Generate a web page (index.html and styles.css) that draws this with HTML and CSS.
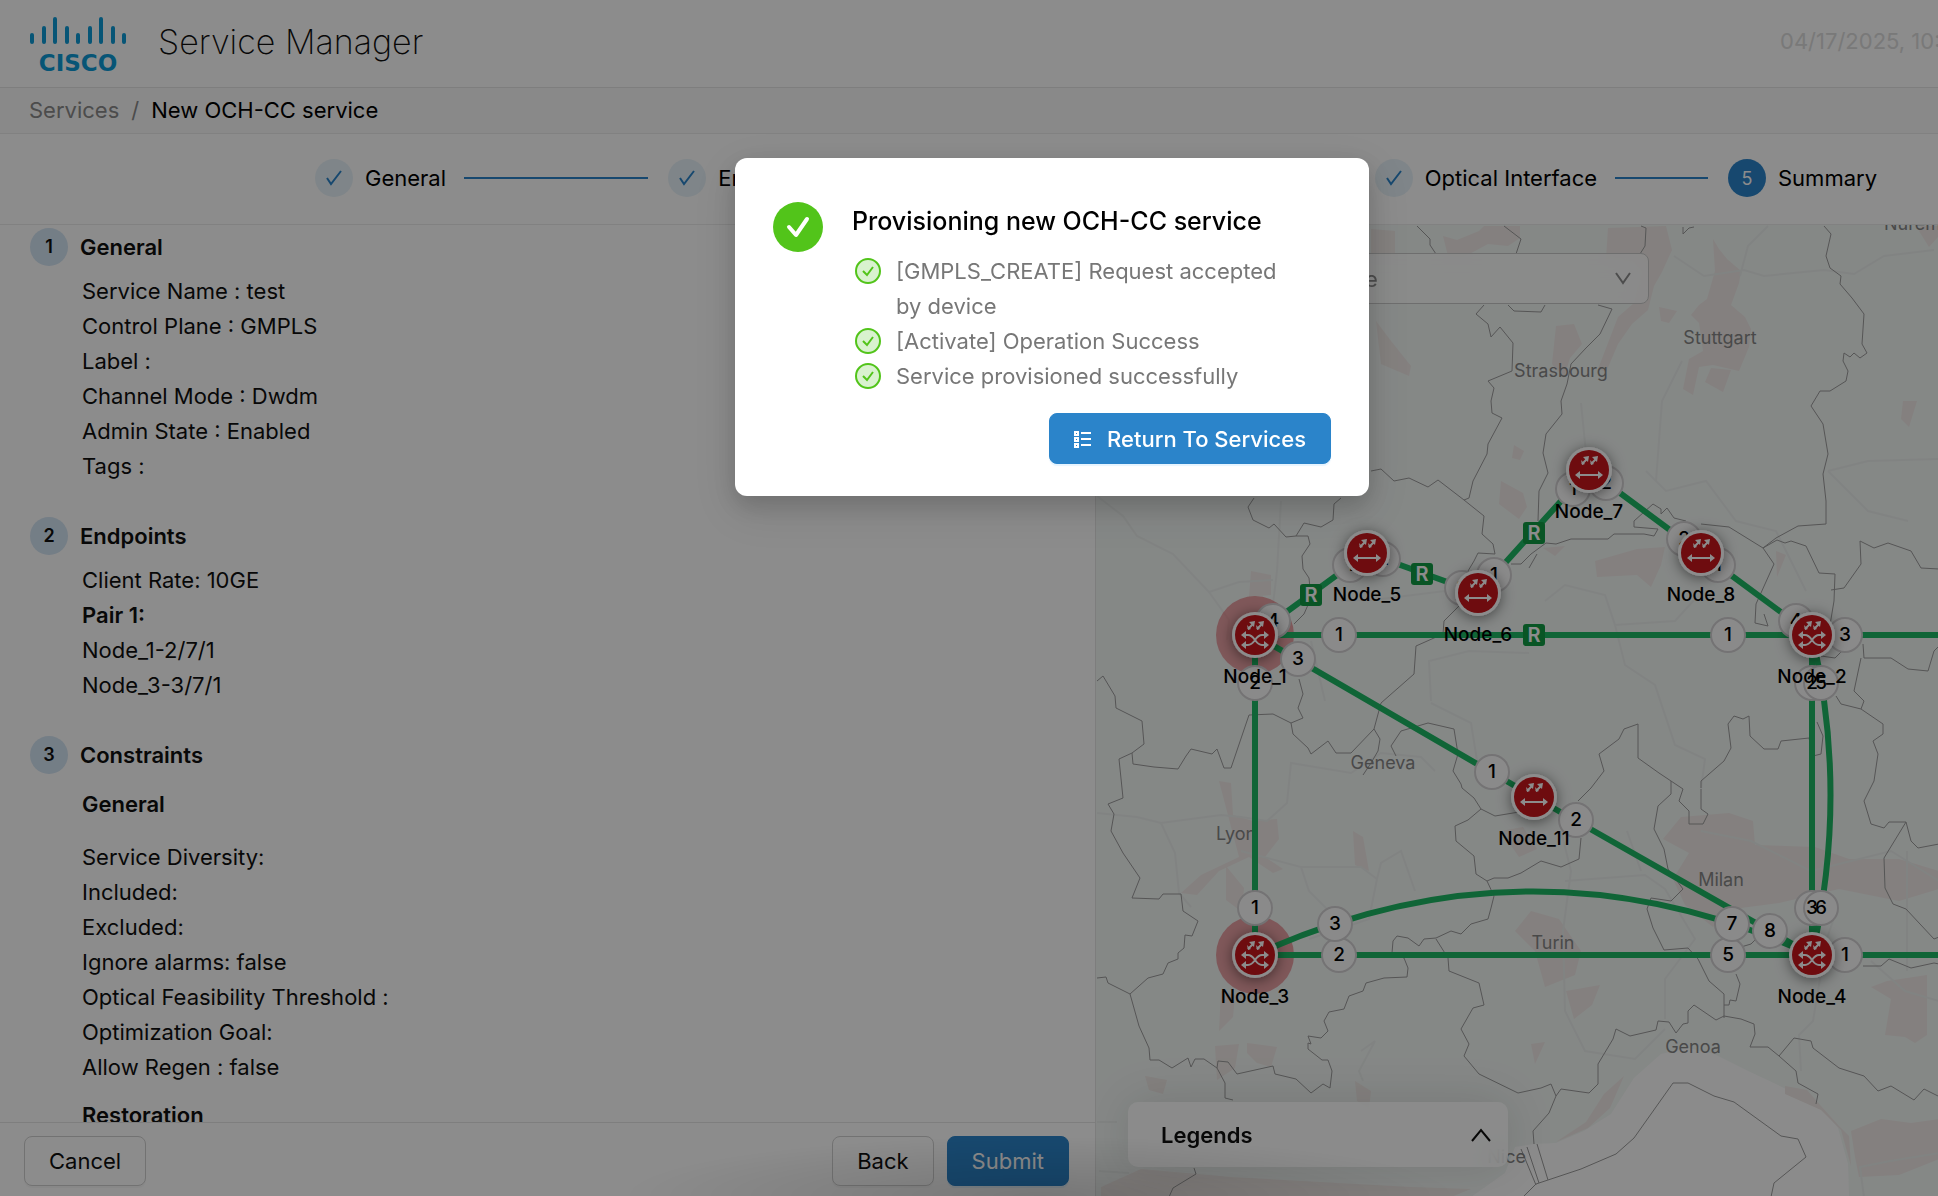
FILE: index.html
```html
<!DOCTYPE html>
<html lang="en">
<head>
    <meta charset="UTF-8">
    <meta name="viewport" content="width=device-width, initial-scale=1.0">
    <title>Service Manager</title>
    <link rel="stylesheet" href="styles.css">
</head>
<body>

<div class="app">
    <!-- Header -->
    <header class="header">
        <svg class="logo" viewBox="0 0 98 56" role="img" aria-label="Cisco">
            <path d="M2 18v7M14 11v14M25 2v23M37 11v14M48 18v7M60 11v14M71 2v23M83 11v14M94 18v7" />
            <text x="48" y="54" text-anchor="middle">CISCO</text>
        </svg>
        <h1>Service Manager</h1>
        <div class="header-date">04/17/2025, 10:42:18</div>
    </header>

    <nav class="breadcrumb">
        <a href="#">Services</a>
        <span class="separator">/</span>
        <span class="current">New OCH-CC service</span>
    </nav>

    <!-- Wizard steps -->
    <ol class="steps">
        <li class="step">
            <span class="step-icon"><svg viewBox="0 0 20 20"><path d="M3 10l4 6 10-13" /></svg></span>
            <span class="step-title">General</span>
        </li>
        <li class="step">
            <span class="step-icon"><svg viewBox="0 0 20 20"><path d="M3 10l4 6 10-13" /></svg></span>
            <span class="step-title">Endpoints</span>
        </li>
        <li class="step">
            <span class="step-icon"><svg viewBox="0 0 20 20"><path d="M3 10l4 6 10-13" /></svg></span>
            <span class="step-title">Constraints</span>
        </li>
        <li class="step">
            <span class="step-icon"><svg viewBox="0 0 20 20"><path d="M3 10l4 6 10-13" /></svg></span>
            <span class="step-title">Optical Interface</span>
        </li>
        <li class="step active">
            <span class="step-icon">5</span>
            <span class="step-title">Summary</span>
        </li>
    </ol>

    <main class="content">
        <section class="summary">
            <div class="summary-body">
                <div class="block">
                    <h2><span class="num">1</span>General</h2>
                    <ul>
                        <li>Service Name : test</li>
                        <li>Control Plane : GMPLS</li>
                        <li>Label :</li>
                        <li>Channel Mode : Dwdm</li>
                        <li>Admin State : Enabled</li>
                        <li>Tags :</li>
                    </ul>
                </div>
                <div class="block">
                    <h2><span class="num">2</span>Endpoints</h2>
                    <ul>
                        <li>Client Rate: 10GE</li>
                        <li><b>Pair 1:</b></li>
                        <li>Node_1-2/7/1</li>
                        <li>Node_3-3/7/1</li>
                    </ul>
                </div>
                <div class="block">
                    <h2><span class="num">3</span>Constraints</h2>
                    <h3 class="first">General</h3>
                    <ul>
                        <li>Service Diversity:</li>
                        <li>Included:</li>
                        <li>Excluded:</li>
                        <li>Ignore alarms: false</li>
                        <li>Optical Feasibility Threshold :</li>
                        <li>Optimization Goal:</li>
                        <li>Allow Regen : false</li>
                    </ul>
                    <h3>Restoration</h3>
                </div>
            </div>
            <footer class="actions">
                <button class="btn" type="button">Cancel</button>
                <div class="actions-right">
                    <button class="btn" type="button">Back</button>
                    <button class="btn btn-primary" type="button">Submit</button>
                </div>
            </footer>
        </section>

        <!-- Topology map -->
        <section class="map">
            <svg class="map-canvas" viewBox="1095 224 842 971" preserveAspectRatio="xMinYMin slice">
                <defs>
                    <filter id="shadow" x="-50%" y="-50%" width="200%" height="200%">
                        <feDropShadow dx="0" dy="2" stdDeviation="7" flood-color="#000" flood-opacity="0.5" />
                    </filter>
                    <g id="disc">
                        <circle r="23" class="node-ring" filter="url(#shadow)" />
                        <circle r="20" class="node-fill" />
                        <path class="node-line" d="M-7-6l5-5M2-6l5-5" />
                        <path class="node-head" d="M-8-10l4 4-3 1zM1-10l4 4-3 1zM0-14l-1 6-5-5zM9-14l-1 6-5-5z" />
                    </g>
                    <g id="amp">
                        <use href="#disc" />
                        <path class="node-line" d="M-10 5h20" />
                        <path class="node-head" d="M-14 5l5-4v8zM14 5l-5-4v8z" />
                    </g>
                    <g id="roadm">
                        <use href="#disc" />
                        <path class="node-line" d="M-10 0h3c7 0 7 10 14 10h3M-10 10h3c7 0 7-10 14-10h3" />
                        <path class="node-head" d="M-14 0l5-4v8zM14 0l-5-4v8zM-14 10l5-4v8zM14 10l-5-4v8z" />
                    </g>
                    <g id="regen">
                        <rect x="-11" y="-11" width="22" height="22" rx="3" />
                        <text y="7">R</text>
                    </g>
                </defs>

                <rect class="land" x="1095" y="224" width="900" height="1000" />
                <path class="sea" d="M1470 1196l34-24 10-26 19-3 22-1 28-12 27-17 23-36 27-24 27-6 26 6 34 17 36 17 37 20 17 20 10 36 1 33z" />

                <g class="urban">
                    <path d="M1442 235l14 4 22-9 5-5 36 0v12l-12 8-20-2-26 14-14-2zM1370 228l24 2v25h-24zM1607 227l58-2 6 24-10 22-8 14-6 24-16 14-14 20-12 28-8-3 20-52 16-14 8-32-10-10-26-2z" />
                    <path d="M1712 238l6 10 8 10 14 12-2 12-8 22 14 12 6 12-2 18-10 24-26-6-14 2-6 28-10-6 6-30 14-8-4-28-8-8 8-10 8-6 8-28zM1658 306l18 4-8 12-8-2zM1710 367l20 2-8 22-18-10zM1555 325l18-2 8 20-12 14-6 20-12-14zM1375 320l15 20 20 25-2 10-28-12z" />
                    <path d="M1500 480l22 12 4 14-8 12-20-15zM1513 444l10 6-4 9-8-2zM1902 400h14l-8 26-8-8zM1920 225h18v10l-10 11-10-16z" />
                    <path d="M1594 560l42-12 28-2-4 18-10 22-14-12-40 2zM1542 547l22-2-10 10zM1250 570l20 4v20l-22 2zM1775 550l10 4-9 22z" />
                    <path d="M1218 780l12 2 2 32 20 6 24-2 2 20-14 18 18 12-10 4-24-16-30 14-22 24-16-2 20-18 38-18zM1225 865l18 22-2 24-16-12zM1352 830l10 6 6 34-14-6z" />
                    <path d="M1680 816l48-4 24 8 2 24 60 2 34 12 50 0 40 12v18l-40 12-60-12-60 14-46 6-20 18-28-22-12-26 16-26-26-14z" />
                    <path d="M1530 910l28 8 22 32-6 24-30 12-10-36-20-20zM1565 990l34-6-8 20-18 14zM1500 830l22-4 14 22-18 8zM1886 980l40-6v60l-12 8-10-6-20-2 6-36-20-12z" />
                    <path d="M1214 1045l24-2-4 24-18 12zM1246 1042l30 4-6 20-14-4-10-10zM1144 1075l22 4-4 14-14-4zM1354 1080l16 10-2 18-12-8zM1220 990l14 4-2 22-14 14zM1530 1043l14-2-10 22zM1100 1186l40-18 90 8 180 10 60 2-20 8h-350z" />
                    <path d="M1784 1085l22 4 14 16 18 20 10 10 2 30-10-36-20-20-36-16zM1850 1130l30-12 30 4 28-4v40l-40 16-40 2-4-20zM1555 1141l32-14 22-20 14-32-20 18-18 28z" />
                </g>

                <path class="roads" d="M1096 495l26 20 14 20 36 18 36 38 30-10 34-2M1280 500l-4 70-6 50M1208 591l20 28-2 20M1096 812l40 4 24 6 60-8 20 2 26 4 20-18 4-40 60 10 30-20 40 4 14 14M1160 822l14 30 4 40 12 14M1240 850l60 16 8 24 20 20M1300 866l60 0 16 12 4-16 20-12 14 40M1376 878l-8 40-60 20M1360 1050l14-10-16 30 4 10M1430 700l-2-40 40-10 60 2M1430 702l40 20 8 50M1645 470l20 20 40-10 30 40 40 10 30 60M1580 402l8 80M1655 480l6-80 20-40M1673 255l30 20 40-6 20 6 60-6 30 4 30-18 50-6M1739 275l8-30 20-20M1827 470l40-10 71-2M1827 470l40 40 40 10M1544 600l20-16 40 10 10 30 60-4 20-22M1614 624l10 40 30 20 20 60 30 14-4 30M1560 830l10 40-8 60 2 80 20 40 50 8 30-30M1564 880l80-6 20 14 30 50-30 40v40M1640 870l-14-40M1700 830l50 10 60 30 80-20 48 30M1822 860l10 60-14 40M1822 960l-10 60-14 14 2 36M1870 960l34 30 34 10M1906 850v120M1340 600l40-2 80-10M1310 640l14 60M1270 420l90 40M1863 1196l-4-30 30-6 49-8M1096 1121h20M1098 1170l30 2" />

                <g class="borders">
                    <path d="M1416 225l13 13v6l6 9M1503 225l17 13-5 15M1640 225l5 2-1 18-5 8M1682 226v7l6-6 5-1" />
                    <path d="M1823 225l7 8-5 22 4 12 11 8-1 8 12 14 12 16-2 30 5 9-7 5-6-5-4 4-6-4-1 8 5 10-2 10-16 10h-10l-6 10-3 5 12 18 5 30-5 20 3 27v23l-28 2-22 12-13 10" />
                    <path d="M1483 304l-8 9 12 10 3 13 9-10 13 16-1 28-24 10 6 7-3 13 1 12 10 5-14 26-1 10-14 27-4 17-5 2M1507 304l6 6 27 1 4-7M1597 304l14 4-12 25-14 14-15 16-4 20-6 17 1 13-16 20-3 19 5 20-9 18-1 30" />
                    <path d="M1370 470l10-2 13 12 15-3 19 9 10-7 26 20 20 16-2 18 11 10 2 10-17-1-4 8-6 10M1340 497l-7 6-1 16-12 7-17-4-8 13-10 1-12-13-5 4-16-8-5-13 6-9" />
                    <path d="M1295 535h12l2 8-8 12 1 13 6 9 2 20-7 16-10 10M1460 603l-17 17-1 13-27 12-2 28-33 29-7 26-23 24h-15l-8-12-17 13-3-6-15-14-2-11 12-5-5-10 5-14-4-15" />
                    <path d="M1290 722l-18-9-24 1-18 53h-7l-7-19-5 5-21-5-5 7-8 13-24-2-21-3-1-11 12-9-2-23-26-13-1-12-12-20-6 5M1131 752l-13 6 4 39-15 6 6 10-3 17 12 22 17 25-8 20 27 1 4-5h18l2 17 15 10-6 15-7-1-1 13-6 5v6l-10 4-5 11-15 4-18 16-22-11-2-6-9 1" />
                    <path d="M1129 993l9 32 10 22 1 12h9l13 8 16-10 3 9 4-8h9l13 9 8 15v15l8 2M1216 1067l1-7 10 1 9 12 36-8 2 8 21 5 15 14 12-9 7 4 2-17-4-11h-6l-14-11v-6l3 1-3-8 13 2 7-7-4-10 5-9 15-3 5-13 14-5 3-8 18-5 23-1 1-9-4-10-12-5 1-12 4-5 11 2 11 8 5-7 12-1 15-7 10 3 10-10 17-5 3-11 3-12-7-15-11-7-2-18-18-15-1-15 13-6 13-11-7-11-12-10-1-4-8-13 5-17-4-25-26-6-27 8-10 15 5 10M1373 728l6 10-2 12-7 12-8 12" />
                    <path d="M1486 880l7-3h14l13-5 20-12 20 6 18-8 2-21M1480 808l14 7 24-4 10-8M1435 938l12 19 1 13 30 12 5 22-11 3-12 21 8 15-5 12 15 18 39 19 23-5 10-4 5 12-7 17-16 18 1 13" />
                    <path d="M1555 1095l5-7 28 4 9-9v-20l15-25 3-10 14 7 26-6 2-9 11 1 7 11 7-9 5-1v-12l6-6 22 15 8-4 17 3 13 5 1 10-5 13h18l11 9 17 15 2 12 20 11-2 10M1778 1055l15-18 17 3 2 7 26 20 25 8 14 15 13-5 23 14 10-11 14 7" />
                    <path d="M1723 1017v-24l-15-13-11-22-10-11-24 2-11-22-6-19 4-11 20 3 12-12-15-20-4-20-10-20 4-23 13-12v-13l-12-8-21-15v-34l-14 5-5 10-20 15 5 17-13 17-13 13M1735 973l4 10-4 17-6-1-1 5h-5M1740 946l10-3 6-6" />
                    <path d="M1700 787v-7l23-20 7-13-3-24 6-8 9 3 6-3 1 20 14 13h14l3-8 28-3 4 18 8-2 2-18-6-14M1670 780l12 8-4 12 10 10v13h14l5-10-7-5v-20M1773 563l-18 40-1 19 13 3-4-12" />
                    <path d="M1762 547l11 16M1762 547l14-8 8 3 6-2 15 5 13 27 16 1-1 27-5 30M1830 589l13-2 17-24-1-23 14 7 14-5 23 8 10 17 18 1M1700 523l28 3 34 21M1652 503l-19 17v6l24 2-4 7-10-2-30 0-6 5h-37l-15 5-10-1-15 11-10 10h-10M1652 503l8 5v5l6-6 7 10 12 3" />
                    <path d="M1862 643l1 14 27 0 17 11 20 2 6-20 5-5M1860 657l-7 33 10 10-3 8-20-5-5-8M1860 708l22 15v10l-10 7 5 13-4 27-10 20 7 23 13 4 5-6h17l5 19 7 7 21-4M1905 821l-22 36 1 30 8 16 13 5 28 30 5-2M1862 965l18 0 8-7 22 9 23-5 5 1M1820 655l14 2 6-6M1536 553l-8 14" />
                    <path d="M1522 1196l13-13 45-15 35-15 18-16 39-55h15l26 13 20 6 47 34 17 3 8 18-32 26-3 14M1520 1148l15 36M1526 1146l12 36M1536 1143l11 36M1193 1167l2 6-23 14-4 9" />
                </g>

                <g class="cities">
                    <text x="1719" y="343" text-anchor="middle">Stuttgart</text>
                    <text x="1560" y="376" text-anchor="middle">Strasbourg</text>
                    <text x="1382" y="768" text-anchor="middle">Geneva</text>
                    <text x="1215" y="839">Lyon</text>
                    <text x="1720" y="885" text-anchor="middle">Milan</text>
                    <text x="1552" y="948" text-anchor="middle">Turin</text>
                    <text x="1692" y="1052" text-anchor="middle">Genoa</text>
                    <text x="1525" y="1162" text-anchor="end">Nice</text>
                    <text x="1883" y="229">Nuremberg</text>
                </g>

                <circle class="halo" cx="1254" cy="634" r="39" />
                <circle class="halo" cx="1254" cy="954" r="39" />

                <g class="links">
                    <path d="M1254 634L1366 552L1477 592L1588 469L1700 552L1811 634" />
                    <path d="M1254 634H1995M1254 954H1995M1254 634V954M1811 634V954" />
                    <path d="M1254 634L1533 796L1811 954" />
                    <path d="M1254 954Q1532 827 1811 954M1811 634Q1848 794 1811 954" />
                </g>

                <g class="regens">
                    <use href="#regen" x="1310" y="594" />
                    <use href="#regen" x="1421" y="573" />
                    <use href="#regen" x="1533" y="532" />
                    <use href="#regen" x="1533" y="634" />
                </g>

                <!-- link port badges -->
                <g class="ports">
                    <circle cx="1272" cy="620" r="17" /><text x="1272" y="626">4</text>
                    <circle cx="1338" cy="634" r="17" /><text x="1338" y="640">1</text>
                    <circle cx="1297" cy="658" r="17" /><text x="1297" y="664">3</text>
                    <circle cx="1254" cy="682" r="17" /><text x="1254" y="688">2</text>
                    <circle cx="1349" cy="564" r="17" /><text x="1349" y="570">1</text>
                    <circle cx="1382" cy="558" r="17" /><text x="1382" y="564">2</text>
                    <circle cx="1461" cy="587" r="17" /><text x="1461" y="593">2</text>
                    <circle cx="1493" cy="574" r="17" /><text x="1493" y="580">1</text>
                    <circle cx="1572" cy="488" r="17" /><text x="1572" y="494">1</text>
                    <circle cx="1605" cy="482" r="17" /><text x="1605" y="488">2</text>
                    <circle cx="1683" cy="538" r="17" /><text x="1683" y="544">2</text>
                    <circle cx="1717" cy="564" r="17" /><text x="1717" y="570">1</text>
                    <circle cx="1795" cy="620" r="17" /><text x="1795" y="626">4</text>
                    <circle cx="1727" cy="634" r="17" /><text x="1727" y="640">1</text>
                    <circle cx="1844" cy="634" r="17" /><text x="1844" y="640">3</text>
                    <circle cx="1811" cy="682" r="17" /><circle cx="1820" cy="682" r="17" />
                    <text x="1811" y="688">2</text><text x="1820" y="688">5</text>
                    <circle cx="1491" cy="771" r="17" /><text x="1491" y="777">1</text>
                    <circle cx="1575" cy="819" r="17" /><text x="1575" y="825">2</text>
                    <circle cx="1254" cy="907" r="17" /><text x="1254" y="913">1</text>
                    <circle cx="1338" cy="954" r="17" /><text x="1338" y="960">2</text>
                    <circle cx="1334" cy="923" r="17" /><text x="1334" y="929">3</text>
                    <circle cx="1727" cy="954" r="17" /><text x="1727" y="960">5</text>
                    <circle cx="1731" cy="923" r="17" /><text x="1731" y="929">7</text>
                    <circle cx="1769" cy="930" r="17" /><text x="1769" y="936">8</text>
                    <circle cx="1844" cy="954" r="17" /><text x="1844" y="960">1</text>
                    <circle cx="1811" cy="907" r="17" /><circle cx="1820" cy="907" r="17" />
                    <text x="1811" y="913">3</text><text x="1820" y="913">6</text>
                </g>

                <g class="nodes">
                    <use href="#roadm" x="1254" y="634" /><text x="1254" y="682">Node_1</text>
                    <use href="#roadm" x="1811" y="634" /><text x="1811" y="682">Node_2</text>
                    <use href="#roadm" x="1254" y="954" /><text x="1254" y="1002">Node_3</text>
                    <use href="#roadm" x="1811" y="954" /><text x="1811" y="1002">Node_4</text>
                    <use href="#amp" x="1366" y="552" /><text x="1366" y="600">Node_5</text>
                    <use href="#amp" x="1477" y="592" /><text x="1477" y="640">Node_6</text>
                    <use href="#amp" x="1588" y="469" /><text x="1588" y="517">Node_7</text>
                    <use href="#amp" x="1700" y="552" /><text x="1700" y="600">Node_8</text>
                    <use href="#amp" x="1533" y="796" /><text x="1533" y="844">Node_11</text>
                </g>
            </svg>

            <div class="map-select">
                <select aria-label="Node">
                    <option>Select an optical node</option>
                </select>
                <svg viewBox="0 0 20 20"><path d="M3 5l7 10 7-10" /></svg>
            </div>

            <button class="legends" type="button">
                Legends
                <svg viewBox="0 0 20 20"><path d="M1 16l9-11 9 11" /></svg>
            </button>
        </section>
    </main>
</div>

<!-- Provisioning result -->
<div class="overlay">
    <div class="modal" role="dialog" aria-labelledby="modalTitle">
        <svg class="modal-icon" viewBox="0 0 50 50">
            <circle cx="25" cy="25" r="25" />
            <path d="M16 25l7 8 11-16" />
        </svg>
        <div class="modal-content">
            <h2 id="modalTitle">Provisioning new OCH-CC service</h2>
            <ul>
                <li>
                    <svg viewBox="0 0 26 26"><circle cx="13" cy="13" r="12" /><path d="M8 13l4 4 6-8" /></svg>
                    <span>[GMPLS_CREATE] Request accepted by device</span>
                </li>
                <li>
                    <svg viewBox="0 0 26 26"><circle cx="13" cy="13" r="12" /><path d="M8 13l4 4 6-8" /></svg>
                    <span>[Activate] Operation Success</span>
                </li>
                <li>
                    <svg viewBox="0 0 26 26"><circle cx="13" cy="13" r="12" /><path d="M8 13l4 4 6-8" /></svg>
                    <span>Service provisioned successfully</span>
                </li>
            </ul>
            <button class="btn btn-primary" type="button">
                <svg viewBox="0 0 18 18"><path d="M1 2h3v3H1zM1 8h3v3H1zM1 14h3v3H1zM7 3h10M7 9h10M7 15h10" /></svg>
                Return To Services
            </button>
        </div>
    </div>
</div>

</body>
</html>
```
FILE: styles.css
```css
* {
    margin: 0;
    padding: 0;
    box-sizing: border-box;
}

body {
    font-family: Inter, "Liberation Sans", sans-serif;
    font-size: 22px;
    line-height: 35px;
    color: #0f0f0f;
    background-color: #fff;
    height: 100vh;
    overflow: hidden;
}

ul, ol {
    list-style: none;
}

svg {
    fill: none;
    flex-shrink: 0;
}

.app {
    display: flex;
    flex-direction: column;
    height: 100vh;
}

/* Header */
.header {
    display: flex;
    align-items: center;
    height: 88px;
    padding: 0 0 4px 30px;
    border-bottom: 1px solid #e6e6e6;
    overflow: hidden;
}

.logo {
    width: 98px;
    height: 56px;
    margin-top: 6px;
}

.logo path {
    stroke: #0d9bd8;
    stroke-width: 4;
    stroke-linecap: round;
}

.logo text {
    font-family: "DejaVu Sans", sans-serif;
    font-size: 23px;
    font-weight: 700;
    fill: #0d9bd8;
}

.header h1 {
    flex-grow: 1;
    margin-left: 30px;
    font-size: 34px;
    font-weight: 200;
    white-space: nowrap;
}

.header-date {
    width: 158px;
    color: #dcdcdc;
    white-space: nowrap;
}

.breadcrumb {
    display: flex;
    align-items: center;
    gap: 12px;
    height: 46px;
    padding-left: 29px;
    background-color: #fafafa;
    border-bottom: 1px solid #ececec;
}

.breadcrumb a,
.separator {
    color: #8a8a8a;
    text-decoration: none;
}

.current {
    color: #000;
}

/* Steps */
.steps {
    display: flex;
    align-items: center;
    height: 91px;
    padding: 0 61px 2px 315px;
    border-bottom: 1px solid #ececec;
    color: #000;
}

.step {
    display: flex;
    flex: 1 1 0;
    align-items: center;
    gap: 12px;
    white-space: nowrap;
}

.step::after {
    content: "";
    flex-grow: 1;
    height: 2px;
    margin: 0 20px 0 6px;
    background-color: #2b84ca;
}

.step.active {
    flex: none;
}

.step.active::after {
    display: none;
}

.step-icon {
    display: flex;
    align-items: center;
    justify-content: center;
    width: 38px;
    height: 38px;
    border-radius: 50%;
    background-color: #e8f3f9;
    font-size: 18px;
}

.step-icon svg {
    width: 20px;
    height: 20px;
    stroke: #2b84ca;
    stroke-width: 2;
}

.step.active .step-icon {
    background-color: #2b84ca;
    color: #fff;
}

/* Summary panel */
.content {
    display: flex;
    flex: 1;
    min-height: 0;
}

.summary {
    display: flex;
    flex-direction: column;
    flex: 0 0 1096px;
    border-right: 1px solid #e4e4e4;
}

.summary-body {
    flex: 1;
    min-height: 0;
    padding: 3px 30px 0;
    overflow: hidden;
}

.block {
    margin-bottom: 33px;
}

.block h2 {
    display: flex;
    align-items: center;
    gap: 12px;
    height: 38px;
    margin-bottom: 8px;
    font-size: 22px;
    font-weight: 600;
}

.num {
    width: 38px;
    height: 38px;
    border-radius: 50%;
    background-color: #d4e5f4;
    font-size: 18px;
    line-height: 38px;
    text-align: center;
}

.block ul,
.block h3 {
    margin-left: 52px;
}

.block h3 {
    margin-top: 13px;
    font-size: 22px;
    font-weight: 600;
}

.block h3.first {
    margin-bottom: 18px;
}

.block b {
    font-weight: 600;
}

.actions {
    display: flex;
    justify-content: space-between;
    align-items: flex-start;
    height: 74px;
    padding: 13px 26px 0 24px;
    border-top: 1px solid #e6e6e6;
}

.actions-right {
    display: flex;
    gap: 13px;
}

.btn {
    height: 50px;
    padding: 0 24px;
    border: 1px solid #d0d0d0;
    border-radius: 8px;
    background-color: #fff;
    color: #0f0f0f;
    font-family: inherit;
    font-size: 22px;
    box-shadow: 0 2px 1px rgba(0, 0, 0, 0.03);
    cursor: pointer;
}

.btn-primary {
    display: flex;
    align-items: center;
    gap: 15px;
    border-color: #2b84ca;
    background-color: #2b84ca;
    color: #fff;
    box-shadow: 0 2px 1px rgba(5, 145, 255, 0.1);
}

.btn-primary svg {
    width: 18px;
    height: 18px;
    stroke: #fff;
    stroke-width: 2;
}

/* Map */
.map {
    position: relative;
    flex: 1;
    min-width: 0;
    overflow: hidden;
}

.map-canvas {
    display: block;
    width: 100%;
    height: 100%;
}

.land {
    fill: #f3f7f5;
}

.sea {
    fill: #fefefe;
}

.urban {
    fill: #f0eae7;
}

.roads {
    stroke: #ebefed;
    stroke-width: 2;
}

.borders {
    stroke: #9c9c9c;
    stroke-width: 1;
    stroke-linejoin: round;
}

.cities {
    fill: #868686;
    font-size: 18px;
    font-weight: 400;
}

.halo {
    fill: #d61e28;
    fill-opacity: 0.4;
}

.links {
    stroke: #1eb964;
    stroke-width: 6;
}

#regen rect {
    fill: #119c44;
}

#regen text {
    fill: #fff;
    font-size: 20px;
    font-weight: 600;
    text-anchor: middle;
}

.ports circle {
    fill: #fcfcfc;
    stroke: #d4d2d4;
    stroke-width: 2;
}

.ports text,
.nodes text {
    fill: #000;
    font-size: 19px;
    font-weight: 500;
    text-anchor: middle;
}

.node-ring {
    fill: #fff;
}

.node-fill {
    fill: #c8161c;
}

.node-line {
    stroke: #fff;
    stroke-width: 2;
}

.node-head {
    fill: #fff;
}

.map-select {
    position: absolute;
    top: 28px;
    left: 33px;
    width: 520px;
    height: 51px;
}

.map-select select {
    width: 100%;
    height: 100%;
    padding-left: 17px;
    appearance: none;
    border: 1px solid #c9c9c9;
    border-radius: 8px;
    background-color: rgba(255, 255, 255, 0.7);
    backdrop-filter: blur(10px);
    color: #8c8c8c;
    font-family: inherit;
    font-size: 22px;
}

.map-select svg {
    position: absolute;
    top: 15px;
    right: 16px;
    width: 20px;
    height: 20px;
    stroke: #8c8c8c;
    stroke-width: 2;
}

.legends {
    position: absolute;
    bottom: 29px;
    left: 32px;
    display: flex;
    align-items: center;
    justify-content: space-between;
    width: 380px;
    height: 65px;
    padding: 0 17px 0 33px;
    border: none;
    border-radius: 10px;
    background-color: rgba(255, 255, 255, 0.8);
    backdrop-filter: blur(10px);
    box-shadow: 0 0 50px rgba(0, 0, 0, 0.12);
    color: #0f0f0f;
    font-family: inherit;
    font-size: 22px;
    font-weight: 600;
}

.legends svg {
    width: 20px;
    height: 20px;
    stroke: #0f0f0f;
    stroke-width: 2;
}

/* Modal */
.overlay {
    position: fixed;
    inset: 0;
    display: flex;
    justify-content: center;
    align-items: flex-start;
    padding: 158px 0 0 166px;
    background: radial-gradient(ellipse 420px 60px at 1040px 100%, rgba(0, 0, 0, 0.15), transparent), rgba(0, 0, 0, 0.45);
}

.modal {
    display: flex;
    gap: 29px;
    width: 634px;
    padding: 44px 38px 32px;
    border-radius: 12px;
    background-color: #fff;
    box-shadow: 0 9px 25px rgba(0, 0, 0, 0.16), 0 14px 45px 10px rgba(0, 0, 0, 0.08);
}

.modal-icon {
    width: 50px;
    height: 50px;
}

.modal-icon circle {
    fill: #52c41a;
}

.modal-icon path {
    stroke: #fff;
    stroke-width: 4;
    stroke-linecap: round;
    stroke-linejoin: round;
}

.modal-content {
    flex: 1;
    display: flex;
    flex-direction: column;
}

.modal-content h2 {
    height: 38px;
    margin-bottom: 14px;
    color: #000;
    font-size: 25px;
    font-weight: 500;
    line-height: 38px;
}

.modal-content li {
    display: flex;
    gap: 15px;
    padding: 0 40px 0 3px;
    color: #777;
}

.modal-content li svg {
    width: 26px;
    height: 26px;
    margin-top: 4px;
}

.modal-content li circle {
    fill: #d9f2cf;
    stroke: #52c41a;
    stroke-width: 2;
}

.modal-content li path {
    stroke: #52c41a;
    stroke-width: 2;
}

.modal-content .btn {
    align-self: flex-end;
    height: 51px;
    margin-top: 19px;
    font-weight: 500;
}
```
